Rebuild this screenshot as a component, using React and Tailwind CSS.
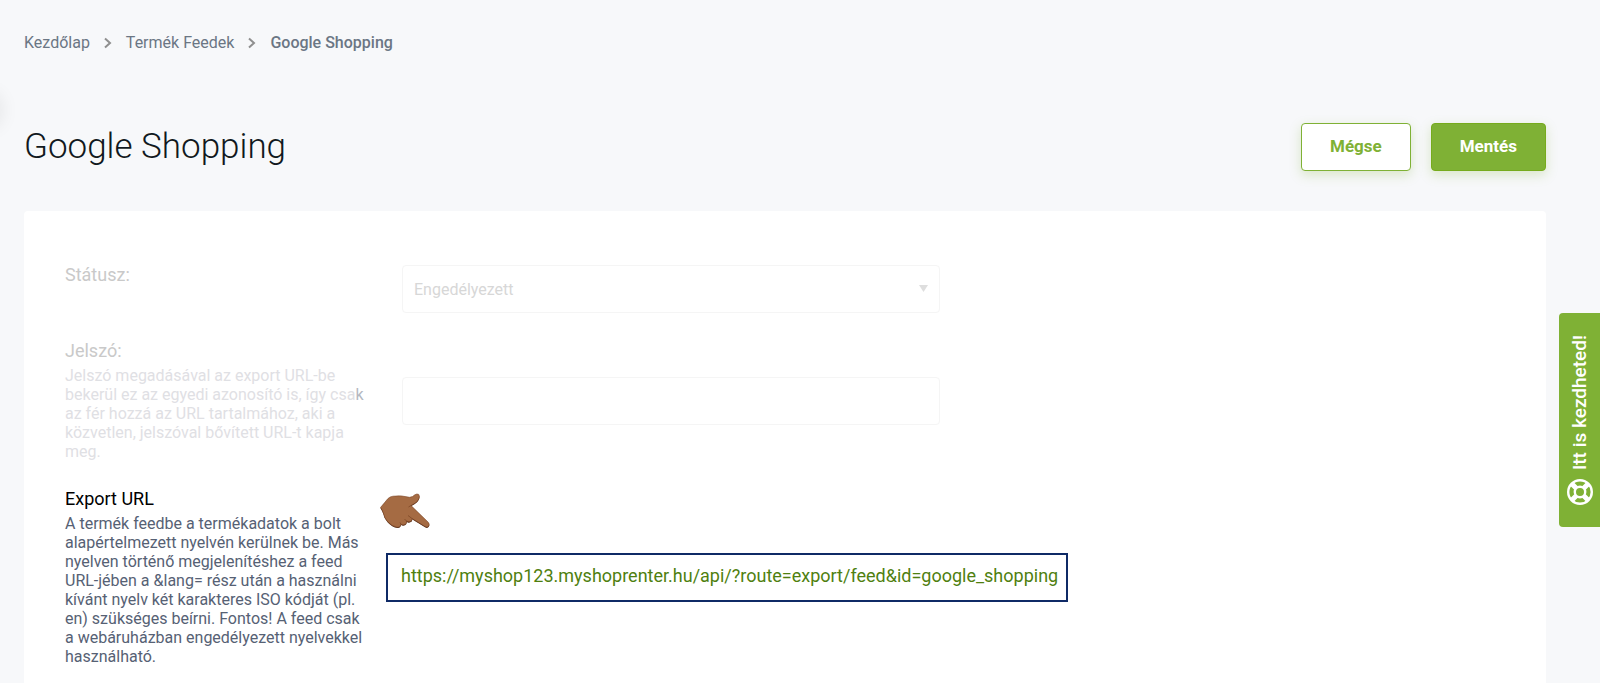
import React, { useState } from 'react';

const EXPORT_URL = 'https://myshop123.myshoprenter.hu/api/?route=export/feed&id=google_shopping';

const HAND_PATH =
  'M.5 14.500 8 5.500Q10 3.500 13 3.200Q21 2 29.500 4.300Q33 4 34.500 2Q37 .3 38.700 1.400Q40 3 38.800 6Q37.500 9 34.500 10.500L31 12.500L48 29Q50 31 48.800 33Q47.500 35 45 33.500L32 25.500Q32.500 27.500 30.800 28.300Q28.500 29.500 26.500 28Q27 30.500 25 31.500Q23 32.500 21 31.300Q20.500 34.500 17.500 34.300Q12 33.500 7.500 28.500Q4 24.500 3.500 20.500Q2.500 17.500 .5 14.500Z';

const Chevron = () => (
  <svg className="h-3 w-2" viewBox="0 0 8 12" fill="none" stroke="#8f8f8f" strokeWidth="2" aria-hidden="true">
    <path d="M1 1.500 6 6 1 10.500" />
  </svg>
);

const LifeRing = () => (
  <svg className="h-[26px] w-[26px] shrink-0" viewBox="0 0 26 26" fill="none" stroke="white" aria-hidden="true">
    <circle cx="13" cy="13" r="11.8" strokeWidth="2.4" />
    <circle cx="13" cy="13" r="5.2" strokeWidth="2.4" />
    <path d="M5 5l4.300 4.300M21 5l-4.300 4.300M5 21l4.300-4.300M21 21l-4.300-4.300" strokeWidth="5" />
  </svg>
);

const PointingHand = () => (
  <svg className="absolute -top-[62px] -left-2 h-9 w-[51px]" viewBox="0 0 51 36" aria-hidden="true">
    <path d={HAND_PATH} fill="#4a2310" transform="translate(0 .8)" />
    <path d={HAND_PATH} fill="#a56b43" stroke="#7d4726" strokeWidth=".6" strokeLinejoin="round" />
    <path d="M31 12.500 28.500 14M32 25.500 28 22.500M26.500 28 24.500 26M21 31.300 20 29.500" stroke="#7d4726" strokeWidth=".8" />
  </svg>
);

const FormRow = ({ label, htmlFor, help, muted, children }) => (
  <div className="flex items-center gap-8">
    <div className={`w-[305px] shrink-0 self-start ${muted ? 'text-[#c9c9c9]' : 'text-black'}`}>
      <label htmlFor={htmlFor} className="block text-lg leading-5">{label}</label>
      {help && (
        <p className={`mt-[5px] text-base leading-[19px] ${muted ? 'text-[#dfe0e4]' : 'text-[#566174]'}`}>{help}</p>
      )}
    </div>
    <div className="min-w-0 flex-1">{children}</div>
  </div>
);

const App = () => {
  const [status, setStatus] = useState('enabled');
  const [password, setPassword] = useState('');

  return (
    <div className="relative min-h-screen overflow-hidden bg-[#f7f8fa] pr-[54px] pl-6 font-['Roboto',sans-serif]">
      <nav className="flex items-center gap-3.5 pt-[31px] text-base leading-6 text-[#6b7684]">
        <a href="#home">Kezdőlap</a>
        <Chevron />
        <a href="#feeds">Termék Feedek</a>
        <Chevron />
        <span className="font-medium">Google Shopping</span>
      </nav>

      <header className="mt-[68px] flex items-center justify-between">
        <h1 className="text-[35px] leading-[48px] font-light text-[#111820]">Google Shopping</h1>
        <div className="flex gap-5">
          <button type="button" className="h-12 rounded border border-[#7fb135] bg-white px-7 text-[17px] font-bold text-[#7fb135] shadow-[0_4px_12px_rgba(127,177,53,0.25)]">
            Mégse
          </button>
          <button type="button" className="h-12 rounded border border-[#76ab1c] bg-[#7fb135] px-7 text-[17px] font-bold text-white shadow-[0_4px_12px_rgba(127,177,53,0.25)]">
            Mentés
          </button>
        </div>
      </header>

      <main className="mt-10 flex flex-col gap-7 rounded-t bg-white px-[41px] pt-[54px] pb-10">
        <FormRow label="Státusz:" htmlFor="status" muted>
          <div className="relative max-w-[538px]">
            <select
              id="status"
              value={status}
              onChange={(e) => setStatus(e.target.value)}
              className="block h-12 w-full appearance-none rounded border border-[#f5f5f5] bg-white px-[11px] pt-0.5 text-base text-[#d7d7d7]"
            >
              <option value="enabled">Engedélyezett</option>
              <option value="disabled">Letiltott</option>
            </select>
            <svg className="pointer-events-none absolute top-5 right-3 h-[7px] w-[9px]" viewBox="0 0 9 7" aria-hidden="true">
              <path d="M0 0h9L4.500 7z" fill="#dedede" />
            </svg>
          </div>
        </FormRow>

        <FormRow
          label="Jelszó:"
          htmlFor="password"
          muted
          help={
            <>
              Jelszó megadásával az export URL-be bekerül ez az egyedi azonosító is, így csa
              <span className="text-[#b4b8c1]">k</span> az fér hozzá az URL tartalmához, aki a közvetlen, jelszóval
              bővített URL-t kapja meg.
            </>
          }
        >
          <input
            id="password"
            type="text"
            value={password}
            onChange={(e) => setPassword(e.target.value)}
            className="block h-12 w-full max-w-[538px] rounded border border-[#f5f5f5] bg-white px-[11px] text-base"
          />
        </FormRow>

        <FormRow
          label="Export URL"
          htmlFor="export-url"
          help="A termék feedbe a termékadatok a bolt alapértelmezett nyelvén kerülnek be. Más nyelven történő megjelenítéshez a feed URL-jében a &lang= rész után a használni kívánt nyelv két karakteres ISO kódját (pl. en) szükséges beírni. Fontos! A feed csak a webáruházban engedélyezett nyelvekkel használható."
        >
          <div className="relative -ml-4 w-fit border-2 border-[#0f2a66] pt-[9px] pr-2 pb-3 pl-[13px]">
            <PointingHand />
            <a id="export-url" href={EXPORT_URL} className="block text-lg leading-6 text-[#4f7f0f]">{EXPORT_URL}</a>
          </div>
        </FormRow>
      </main>

      <div className="absolute top-[102px] -left-5 h-4 w-3 rounded-full shadow-[0_0_18px_10px_rgba(0,0,0,0.08)]" />

      <button
        type="button"
        className="absolute top-[313px] right-0 flex w-[41px] flex-col items-center gap-[9px] rounded-l bg-[#7fb135] py-[22px] text-[19px] font-medium text-white"
      >
        <span className="rotate-180 leading-6 whitespace-nowrap [writing-mode:vertical-rl]">Itt is kezdheted!</span>
        <LifeRing />
      </button>
    </div>
  );
};

export default App;
